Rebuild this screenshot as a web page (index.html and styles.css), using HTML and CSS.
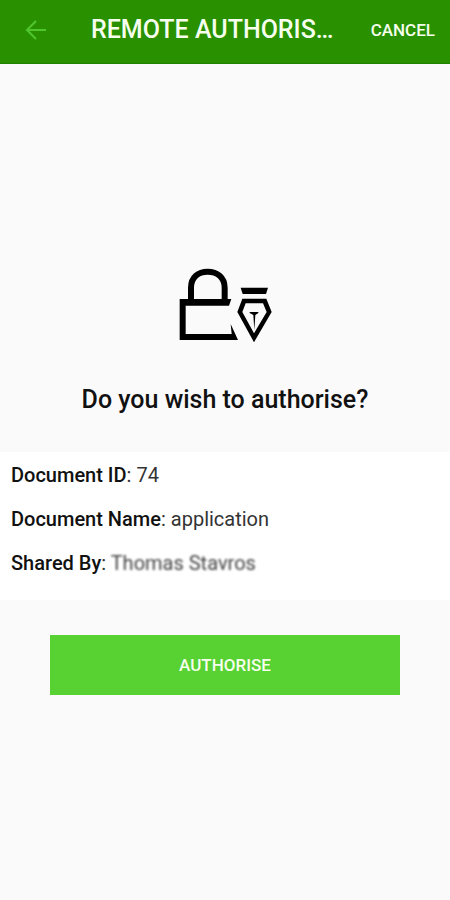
FILE: index.html
```html
<!DOCTYPE html>
<html lang="en">
<head>
<meta charset="utf-8">
<meta name="viewport" content="width=device-width, initial-scale=1">
<title>Remote Authorisation</title>
<link rel="stylesheet" href="styles.css">
</head>
<body>
<header class="bar">
  <button class="back" type="button" aria-label="Back">
    <svg width="24" height="24" viewBox="0 0 24 24" aria-hidden="true"><path d="M22 12H3M12 3L3 12l9 9"/></svg>
  </button>
  <h1 class="title">REMOTE AUTHORIS…</h1>
  <button class="cancel" type="button">CANCEL</button>
</header>
<main class="content">
  <svg class="emblem" width="120" height="100" viewBox="0 0 360 300" aria-hidden="true">
    <path class="line" d="M78 134V98C78 66 100 50 128 50S179 66 179 98V134"/>
    <path d="M44 132H199L192 152H62V237H200L197 207L219 255H44Z"/>
    <path d="M227 98H309L303 117H233Z"/>
    <path fill-rule="evenodd" d="M232 131H304L320 171L267 262L217 171ZM242 145L232 171L267 235L305 171L294 145Z"/>
    <path d="M254 171H280V174L271 180L268 225L265 180L254 174Z"/>
  </svg>
  <h2 class="question">Do you wish to authorise?</h2>
  <dl class="details">
    <div class="row"><dt>Document ID</dt><dd>: 74</dd></div>
    <div class="row"><dt>Document Name</dt><dd>: application</dd></div>
    <div class="row"><dt>Shared By</dt><dd>: <span class="obscured">Thomas Stavros</span></dd></div>
  </dl>
  <button class="authorise" type="button">AUTHORISE</button>
</main>
</body>
</html>
```
FILE: styles.css
```css
* {
  box-sizing: border-box;
}

body {
  margin: 0;
  min-height: 100vh;
  background: #fafafa;
  color: #111;
  font-family: Roboto, "Liberation Sans", sans-serif;
}

button {
  border: 0;
  padding: 0;
  font: inherit;
  cursor: pointer;
}

.bar {
  display: flex;
  align-items: center;
  height: 64px;
  padding: 0 15px 3px 24px;
  background: #299100;
  border-bottom: 1px solid #208000;
  color: #f6ffee;
}

.back,
.cancel {
  background: none;
  color: inherit;
}

.back {
  display: flex;
}

.back svg {
  fill: none;
  stroke: #50c62c;
  stroke-width: 2;
}

.title {
  flex: 1;
  margin: 0 0 0 43px;
  font-size: 25px;
  line-height: 32px;
  font-weight: 500;
  white-space: nowrap;
}

.cancel {
  font-size: 17px;
  line-height: 24px;
  font-weight: 500;
}

.content {
  display: flex;
  flex-direction: column;
  align-items: center;
  padding-top: 191px;
}

.emblem .line {
  fill: none;
  stroke: #000;
  stroke-width: 18;
}

.question {
  margin: 29px 0 36px;
  font-size: 25px;
  line-height: 32px;
  font-weight: 500;
}

.details {
  display: grid;
  gap: 20px;
  width: 100%;
  margin: 0 0 35px;
  padding: 11px 11px 25px;
  background: #fff;
  font-size: 20px;
  line-height: 24px;
}

.row {
  display: flex;
}

.row dt {
  font-weight: 500;
}

.row dd {
  margin: 0;
  color: #333;
  font-weight: 400;
  white-space: pre;
}

.obscured {
  color: #444;
  filter: blur(1px);
}

.authorise {
  align-self: stretch;
  height: 60px;
  margin: 0 50px;
  background: #58d132;
  color: #f6ffee;
  font-size: 17px;
  font-weight: 500;
}
```
